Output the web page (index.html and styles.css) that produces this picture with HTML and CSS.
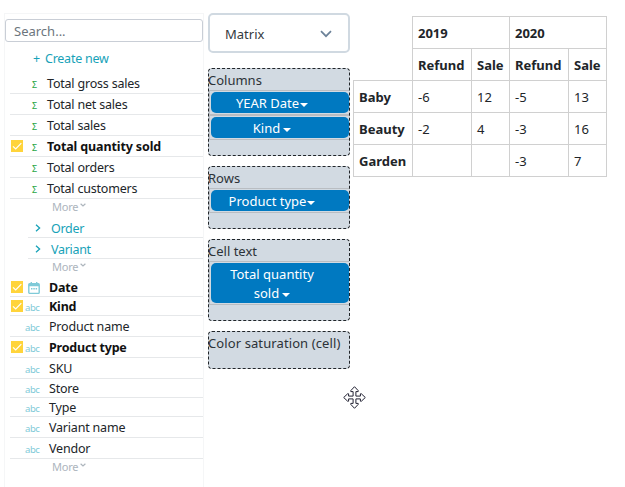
FILE: index.html
```html
<!DOCTYPE html>
<html lang="en">
<head>
<meta charset="utf-8">
<title>Matrix report</title>
<link rel="stylesheet" href="styles.css">
</head>
<body>
<svg class="defs" width="0" height="0">
  <symbol id="check" viewBox="0 0 12 12"><path d="M2 6.3 4.7 9 10.3 3.2" fill="none" stroke="#fff" stroke-width="1.2"/></symbol>
  <symbol id="down" viewBox="0 0 6 4"><path d="M.6 .7 3 2.9 5.4 .7" fill="none" stroke="currentColor" stroke-width="1.2"/></symbol>
  <symbol id="right" viewBox="0 0 6 8"><path d="M1 .8 4.6 4 1 7.2" fill="none" stroke="currentColor" stroke-width="1.3"/></symbol>
</svg>
<main class="layout">
  <aside class="fields">
    <div class="search">Search...</div>
    <div class="create"><span class="plus">+</span><span>Create new</span></div>
    <ul class="list measures">
      <li><i class="box"></i><i class="sigma">Σ</i><span class="t">Total gross sales</span></li>
      <li><i class="box"></i><i class="sigma">Σ</i><span class="t">Total net sales</span></li>
      <li><i class="box"></i><i class="sigma">Σ</i><span class="t">Total sales</span></li>
      <li class="on"><i class="box"><svg><use href="#check"/></svg></i><i class="sigma">Σ</i><span class="t">Total quantity sold</span></li>
      <li><i class="box"></i><i class="sigma">Σ</i><span class="t">Total orders</span></li>
      <li><i class="box"></i><i class="sigma">Σ</i><span class="t">Total customers</span></li>
    </ul>
    <div class="more">More<svg><use href="#down"/></svg></div>
    <ul class="groups">
      <li><svg><use href="#right"/></svg><span>Order</span></li>
      <li><svg><use href="#right"/></svg><span>Variant</span></li>
    </ul>
    <div class="more">More<svg><use href="#down"/></svg></div>
    <ul class="list attrs">
      <li class="on mid"><i class="box"><svg><use href="#check"/></svg></i><i class="abc"><svg class="cal" viewBox="0 0 12 12"><rect x=".8" y="1.8" width="10.4" height="9.6" rx="1" fill="none" stroke="#7fcad8" stroke-width="1.4"/><path d="M.8 1.5h10.4V4.2H.8zM2.6 0h1.4v2H2.6zM8 0h1.4v2H8zM3 6h1.5v1.5H3zM5.3 6h1.5v1.5H5.3zM7.6 6h1.5v1.5H7.6z" fill="#7fcad8"/></svg></i><span class="t">Date</span></li>
      <li class="on low"><i class="box"><svg><use href="#check"/></svg></i><i class="abc">abc</i><span class="t">Kind</span></li>
      <li><i class="box"></i><i class="abc">abc</i><span class="t">Product name</span></li>
      <li class="on"><i class="box"><svg><use href="#check"/></svg></i><i class="abc">abc</i><span class="t">Product type</span></li>
      <li><i class="box"></i><i class="abc">abc</i><span class="t">SKU</span></li>
      <li class="low"><i class="box"></i><i class="abc">abc</i><span class="t">Store</span></li>
      <li class="low"><i class="box"></i><i class="abc">abc</i><span class="t">Type</span></li>
      <li><i class="box"></i><i class="abc">abc</i><span class="t">Variant name</span></li>
      <li><i class="box"></i><i class="abc">abc</i><span class="t">Vendor</span></li>
    </ul>
    <div class="more">More<svg><use href="#down"/></svg></div>
  </aside>

  <section class="config">
    <div class="select"><span>Matrix</span><svg viewBox="0 0 12 8"><path d="M1 1.2 6 6.2 11 1.2" fill="none" stroke="#6c8299" stroke-width="1.7"/></svg></div>
    <div class="zone"><div class="label">Columns</div>
      <div class="slot"><div class="pill">YEAR Date<b></b></div></div>
      <div class="slot"><div class="pill">Kind<b class="gap"></b></div></div>
    </div>
    <div class="zone"><div class="label">Rows</div>
      <div class="slot"><div class="pill">Product type<b></b></div></div>
    </div>
    <div class="zone"><div class="label">Cell text</div>
      <div class="slot"><div class="pill">Total quantity<br>sold<b class="gap"></b></div></div>
    </div>
    <div class="zone empty"><div class="label wide">Color saturation (cell)</div></div>
  </section>

  <table class="matrix">
    <colgroup><col class="c1"><col class="c2"><col class="c3"><col class="c2"><col class="c3"></colgroup>
    <tr><td class="blank" rowspan="2"></td><th colspan="2">2019</th><th colspan="2">2020</th></tr>
    <tr><th>Refund</th><th>Sale</th><th>Refund</th><th>Sale</th></tr>
    <tr><th>Baby</th><td>-6</td><td>12</td><td>-5</td><td>13</td></tr>
    <tr><th>Beauty</th><td>-2</td><td>4</td><td>-3</td><td>16</td></tr>
    <tr><th>Garden</th><td></td><td></td><td>-3</td><td>7</td></tr>
  </table>
</main>
<svg class="cursor" viewBox="0 0 23 23"><path d="M11.5.7 15.2 4.6V5.6H12.9V10.1H17.4V7.8H18.4L22.3 11.5 18.4 15.2H17.4V12.9H12.9V17.4H15.2V18.4L11.5 22.3 7.8 18.4V17.4H10.1V12.9H5.6V15.2H4.6L.7 11.5 4.6 7.8H5.6V10.1H10.1V5.6H7.8V4.6Z" fill="#fff" stroke="#223" stroke-width="1"/></svg>
</body>
</html>
```

FILE: styles.css
```css
* { box-sizing: border-box; }
body { margin: 0; width: 625px; height: 487px; overflow: hidden; background: #fff; color: #212529; font-family: "Noto Sans", "Open Sans", sans-serif; font-size: 12.5px; }
ul { list-style: none; margin: 0; padding: 0; }
i { font-style: normal; }
svg { display: block; }
.defs { position: absolute; }
.layout { display: flex; align-items: flex-start; }

.fields { width: 200px; height: 474px; margin: 13px 0 0 4px; padding: 5px 0 0; border: 1px solid #f5f6f7; border-bottom: 0; }
.search { height: 23px; margin: 0; padding-left: 8px; border: 1px solid #c9ced6; border-radius: 3px; line-height: 23px; font-size: 13px; color: #6c757d; }
.create { display: flex; height: 31px; padding-left: 28px; line-height: 34px; color: #17a2b8; letter-spacing: -.25px; }
.plus { width: 12px; }
.list, .groups { margin-left: 5px; }
.list li { display: flex; align-items: center; height: 21px; border-bottom: 1px solid #e6e8ea; white-space: nowrap; }
.list .on { font-weight: 700; color: #111; }
.t { letter-spacing: -.2px; }
.measures .on .t { letter-spacing: -.12px; }
.list .mid { height: 20px; padding-top: 1px; }
.list .low { height: 19px; }
.box { flex: none; width: 12px; height: 12px; margin-right: 9px; margin-left: 1px; }
.on .box { background: #ffd43b; }
.box svg { width: 12px; height: 12px; }
.sigma { width: 15px; color: #28a745; font-size: 9px; font-weight: 400; padding-top: 2px; }
.attrs .box { margin-right: 2px; }
.abc { width: 24px; color: #7fcad8; font-size: 9.5px; font-weight: 400; padding-top: 3px; letter-spacing: -.4px; }
.cal { width: 12px; height: 12px; margin: -2px 0 0 3px; }
.more { display: flex; align-items: center; gap: 2px; height: 18px; padding-bottom: 4px; margin-left: 47px; color: #adb5bd; font-size: 11px; letter-spacing: -.2px; }
.more svg { width: 6px; height: 4px; margin-top: -2px; }
.groups { margin-left: 23px; color: #17a2b8; }
.groups li { display: flex; align-items: center; height: 21px; padding: 2px 0 0 7px; border-bottom: 1px solid #e6e8ea; letter-spacing: -.3px; }
.groups svg { width: 6px; height: 8px; margin-right: 10px; }

.config { width: 142px; margin: 13px 0 0 4px; }
.select { display: flex; align-items: center; justify-content: space-between; height: 40px; margin-bottom: 15px; padding: 2px 16px 0 15px; border: 2px solid #d0d9e1; border-radius: 5px; font-size: 13px; color: #343a40; }
.select svg { width: 12px; height: 8px; }
.zone { padding-bottom: 15px; margin-bottom: 10px; border: 1px dashed #212529; border-radius: 4px; background: #d2dae2; }
.label { height: 21px; line-height: 22px; margin-left: -1px; font-size: 13px; white-space: nowrap; color: #2c3238; }
.wide { letter-spacing: .1px; }
.slot { padding: 1px 0 1px 1px; border: 1px solid #b9bdc2; border-right: 0; }
.pill { padding: 2px 16px 0 0; border-radius: 5px; background: #0079c1; color: #fff; font-size: 13px; line-height: 19px; text-align: center; }
.pill b { display: inline-block; margin-left: 1px; vertical-align: 1px; border: 4px solid transparent; border-top-color: #fff; border-bottom: 0; }
.pill .gap { margin-left: 3px; }
.empty { height: 38px; padding: 0; }

.matrix { width: 254px; margin: 16px 0 0 3px; table-layout: fixed; border-collapse: collapse; }
.c1, .c2 { width: 59px; }
.c3 { width: 38px; }
.matrix th, .matrix td { height: 32px; padding: 0 0 0 5px; border: 1px solid #d0d0d0; text-align: left; font-size: 13px; white-space: nowrap; }
.matrix th { font-weight: 700; }
.matrix .blank { border-top-style: hidden; border-left-style: hidden; }
.cursor { position: absolute; left: 343px; top: 386px; width: 23px; height: 23px; }
```
